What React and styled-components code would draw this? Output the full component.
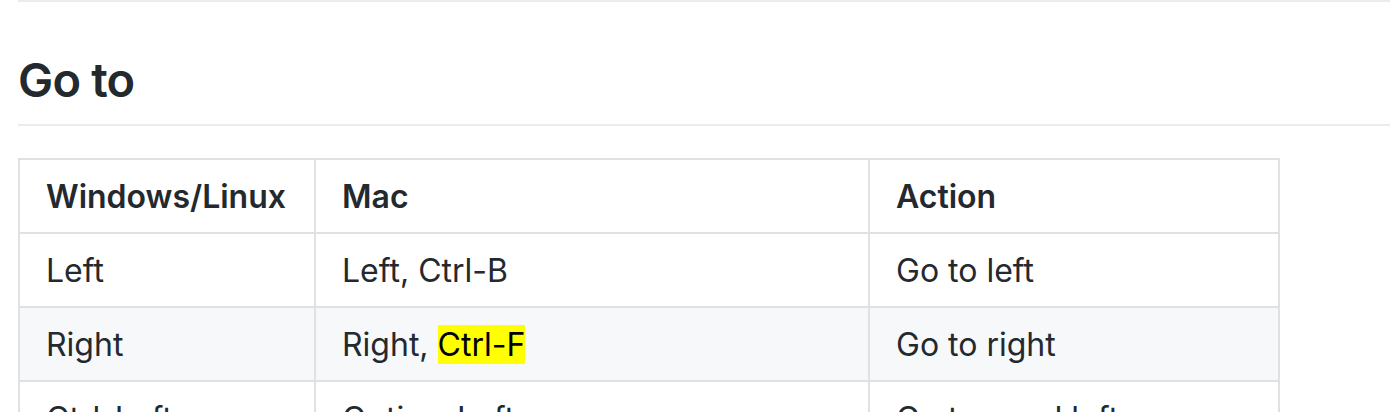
import React from "react";
import styled, { createGlobalStyle } from "styled-components";

const Global = createGlobalStyle`
  html, body { margin: 0; padding: 0; background: #fff; overflow: hidden; }
  body {
    font-family: Inter, "Noto Sans", "Liberation Sans", sans-serif;
    color: #24292e;
    -webkit-font-smoothing: antialiased;
  }
`;

const Article = styled.article`
  padding-left: 18px;
  font-size: 32px;
  line-height: 1.5;
`;

const Rule = styled.div`
  height: 2px;
  background: #eaecef;
`;

const Heading = styled.h2`
  margin: 48px 0 32px;
  padding-bottom: 14px;
  border-bottom: 2px solid #eaecef;
  font-size: 47px;
  line-height: 60px;
  font-weight: 600;
  letter-spacing: -0.8px;
`;

const Table = styled.table`
  border-collapse: collapse;
  border-spacing: 0;
  table-layout: fixed;
  width: 1260px;
`;

const Row = styled.tr`
  background: ${(p) => (p.$striped ? "#f6f8fa" : "#fff")};
`;

const Cell = styled.td`
  border: 2px solid #dfe2e5;
  padding: 13px 26px 11px;
  text-align: left;
  font-weight: ${(p) => (p.$head ? 600 : 400)};
  white-space: nowrap;
  height: 48px;
`;

const Mark = styled.mark`
  background: #ffff00;
  color: #000;
`;

const rows = [
  ["Left", <>Left, Ctrl-B</>, "Go to left"],
  ["Right", <>Right, <Mark>Ctrl-F</Mark></>, "Go to right"],
  ["Ctrl-Left", "Option-Left", "Go to word left"],
];

export default function App() {
  return (
    <>
      <Global />
      <Article>
        <Rule />
        <Heading>Go to</Heading>
        <Table>
          <colgroup>
            <col style={{ width: 296 }} />
            <col style={{ width: 554 }} />
            <col style={{ width: 410 }} />
          </colgroup>
          <thead>
            <Row>
              <Cell as="th" $head>Windows/Linux</Cell>
              <Cell as="th" $head>Mac</Cell>
              <Cell as="th" $head>Action</Cell>
            </Row>
          </thead>
          <tbody>
            {rows.map((r, i) => (
              <Row key={i} $striped={i % 2 === 1}>
                {r.map((c, j) => (
                  <Cell key={j}>{c}</Cell>
                ))}
              </Row>
            ))}
          </tbody>
        </Table>
      </Article>
    </>
  );
}
